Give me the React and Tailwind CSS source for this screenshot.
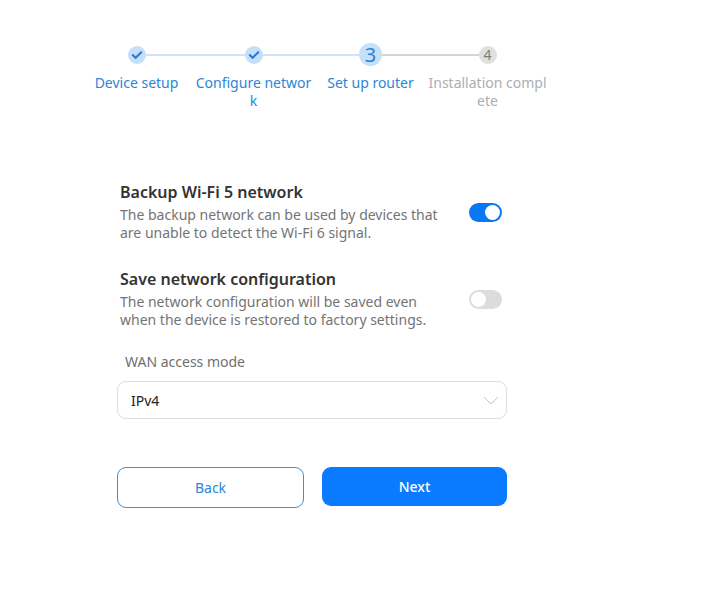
const steps = [
  { label: 'Device setup', state: 'done', left: null, right: 'bg-[#cfe4f8]' },
  { label: 'Configure network', state: 'done', left: 'bg-[#cfe4f8]', right: 'bg-[#cfe4f8]' },
  { label: 'Set up router', state: 'current', left: 'bg-[#cfe4f8]', right: 'bg-[#d4d4d4]' },
  { label: 'Installation complete', state: 'todo', left: 'bg-[#d4d4d4]', right: null },
];

function StepDot({ step, index }) {
  if (step.state === 'done') {
    return (
      <div className="w-[18px] h-[18px] rounded-full bg-[#c5dff8] flex items-center justify-center shrink-0">
        <svg width="12" height="10" viewBox="0 0 12 10" fill="none">
          <path d="M1.2 4.6 L4.6 7.8 L10.8 1.8" stroke="#2a78cf" strokeWidth="2" />
        </svg>
      </div>
    );
  }
  if (step.state === 'current') {
    return (
      <div className="w-[23px] h-[23px] rounded-full bg-[#c5e1fa] flex items-center justify-center shrink-0 text-[20px] leading-none text-[#2a80d6]">
        {index + 1}
      </div>
    );
  }
  return (
    <div className="w-[18px] h-[18px] rounded-full bg-[#dfdfdf] flex items-center justify-center shrink-0 text-[14px] leading-none text-[#7d7d7d]">
      {index + 1}
    </div>
  );
}

function Stepper() {
  return (
    <div className="grid grid-cols-[repeat(4,117px)] ml-[78px]">
      {steps.map((step, i) => (
        <div key={step.label} className="flex flex-col items-center">
          <div className="flex items-center w-full h-[23px]">
            <div className={`flex-1 h-[2px] ${step.left || ''}`} />
            <StepDot step={step} index={i} />
            <div className={`flex-1 h-[2px] ${step.right || ''}`} />
          </div>
          <div
            className={`w-[120px] shrink-0 mt-[8px] text-center text-[14px] leading-[18px] break-all ${
              step.state === 'todo' ? 'text-[#aeaeae]' : 'text-[#2b86d9]'
            }`}
          >
            {step.label}
          </div>
        </div>
      ))}
    </div>
  );
}

function Toggle({ on }) {
  return (
    <div
      className={`w-[33px] h-[19px] rounded-full flex items-center px-[2px] shrink-0 ${
        on ? 'bg-[#0a78f5] justify-end' : 'bg-[#dcdcdc] justify-start'
      }`}
    >
      <div className="w-[15px] h-[15px] rounded-full bg-white" />
    </div>
  );
}

function OptionRow({ title, desc, on }) {
  return (
    <div className="flex items-start justify-between pl-[3px] pr-[5px]">
      <div>
        <div className="text-[16px] leading-[22px] font-semibold text-[#333]">{title}</div>
        <div className="mt-[3px] text-[14px] leading-[18px] text-[#747474]">
          {desc.map((line) => (
            <div key={line}>{line}</div>
          ))}
        </div>
      </div>
      <div className="mt-[22px]">
        <Toggle on={on} />
      </div>
    </div>
  );
}

export default function App() {
  return (
    <div className="w-[709px] h-[600px] bg-white pt-[43px] font-['Noto_Sans',sans-serif] overflow-hidden">
      <Stepper />

      <div className="ml-[117px] w-[390px] mt-[71px]">
        <div className="flex flex-col gap-[26px]">
          <OptionRow
            title="Backup Wi-Fi 5 network"
            desc={['The backup network can be used by devices that', 'are unable to detect the Wi-Fi 6 signal.']}
            on
          />
          <OptionRow
            title="Save network configuration"
            desc={['The network configuration will be saved even', 'when the device is restored to factory settings.']}
            on={false}
          />
        </div>

        <div className="mt-[23px] ml-[8px] text-[14px] leading-[20px] text-[#6f6f6f]">WAN access mode</div>

        <div className="mt-[9px] h-[38px] border border-[#dcdcdc] rounded-[9px] flex items-center justify-between pl-[13px] pr-[7px]">
          <span className="text-[14px] text-[#222]">IPv4</span>
          <svg width="16" height="9" viewBox="0 0 16 9" fill="none">
            <path d="M1 1 L8 8 L15 1" stroke="#c4c4c4" strokeWidth="1" />
          </svg>
        </div>

        <div className="mt-[48px] flex justify-between items-start">
          <button className="w-[187px] h-[41px] border border-[#3f8fcf] rounded-[9px] bg-white text-[14px] text-[#2b86d9]">
            Back
          </button>
          <button className="w-[185px] h-[39px] rounded-[9px] bg-[#0a7bff] text-[14px] font-medium text-white">
            Next
          </button>
        </div>
      </div>
    </div>
  );
}
